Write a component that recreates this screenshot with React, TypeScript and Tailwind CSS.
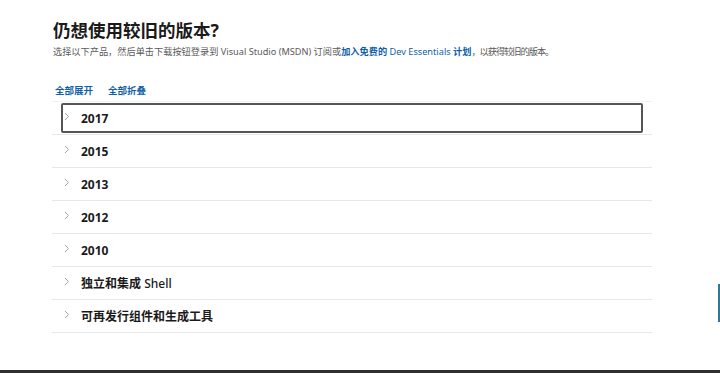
import { ReactNode } from "react";

const rows: ReactNode[] = [
  "2017",
  "2015",
  "2013",
  "2012",
  "2010",
  <>
    独立和集成 <span className="font-medium">Shell</span>
  </>,
  "可再发行组件和生成工具",
];

function Chevron() {
  return (
    <svg width="6" height="9" viewBox="0 0 6 9" className="mt-[7px] shrink-0">
      <path d="M1 1 L4.5 4.5 L1 8" fill="none" stroke="#9a9a9a" strokeWidth="0.9" />
    </svg>
  );
}

export default function App() {
  return (
    <div
      className="relative w-[720px] h-[373px] bg-white overflow-hidden border-b-[3px] border-[#2f2f2f]"
      style={{ fontFamily: '"Noto Sans", "Noto Sans CJK SC", sans-serif' }}
    >
      <div className="pl-[53px] pt-[17px]">
        <h1 className="text-[17.5px] leading-[26px] font-bold text-[#1a1a1a]">仍想使用较旧的版本?</h1>
        <p className="mt-[2px] text-[9.2px] leading-[14px] text-[#5a5a5a]">
          选择以下产品，然后单击下载按钮登录到 Visual Studio (MSDN) 订阅或
          <span className="text-[#0f5fa8] font-bold">加入免费的 </span>
          <span className="text-[#0f5fa8]">Dev Essentials </span>
          <span className="text-[#0f5fa8] font-bold">计划</span>
          <span className="tracking-[-1px]">，以获得较旧的版本。</span>
        </p>
        <div className="mt-[25px] flex gap-[15px] pl-[2px] text-[9.5px] leading-[14px] font-bold text-[#0f5fa8]">
          <span>全部展开</span>
          <span>全部折叠</span>
        </div>
      </div>

      <div className="ml-[52px] mt-[3px] w-[600px] border-t border-[#f0f0f0]">
        {rows.map((label, i) => (
          <div key={i} className="h-[33px] border-b border-[#e8e8e8] px-[9px] py-[1px]">
            <div
              className={
                "h-full flex items-start pl-[1px] " +
                (i === 0 ? "border-2 border-[#555] rounded-[2px]" : "border-2 border-transparent")
              }
            >
              <Chevron />
              <span className="ml-[11px] leading-[27px] text-[12px] font-bold text-[#1a1a1a]">{label}</span>
            </div>
          </div>
        ))}
      </div>

      <div className="absolute right-0 top-[284px] w-[2px] h-[38px] bg-[#2b7a9a]" />
    </div>
  );
}
